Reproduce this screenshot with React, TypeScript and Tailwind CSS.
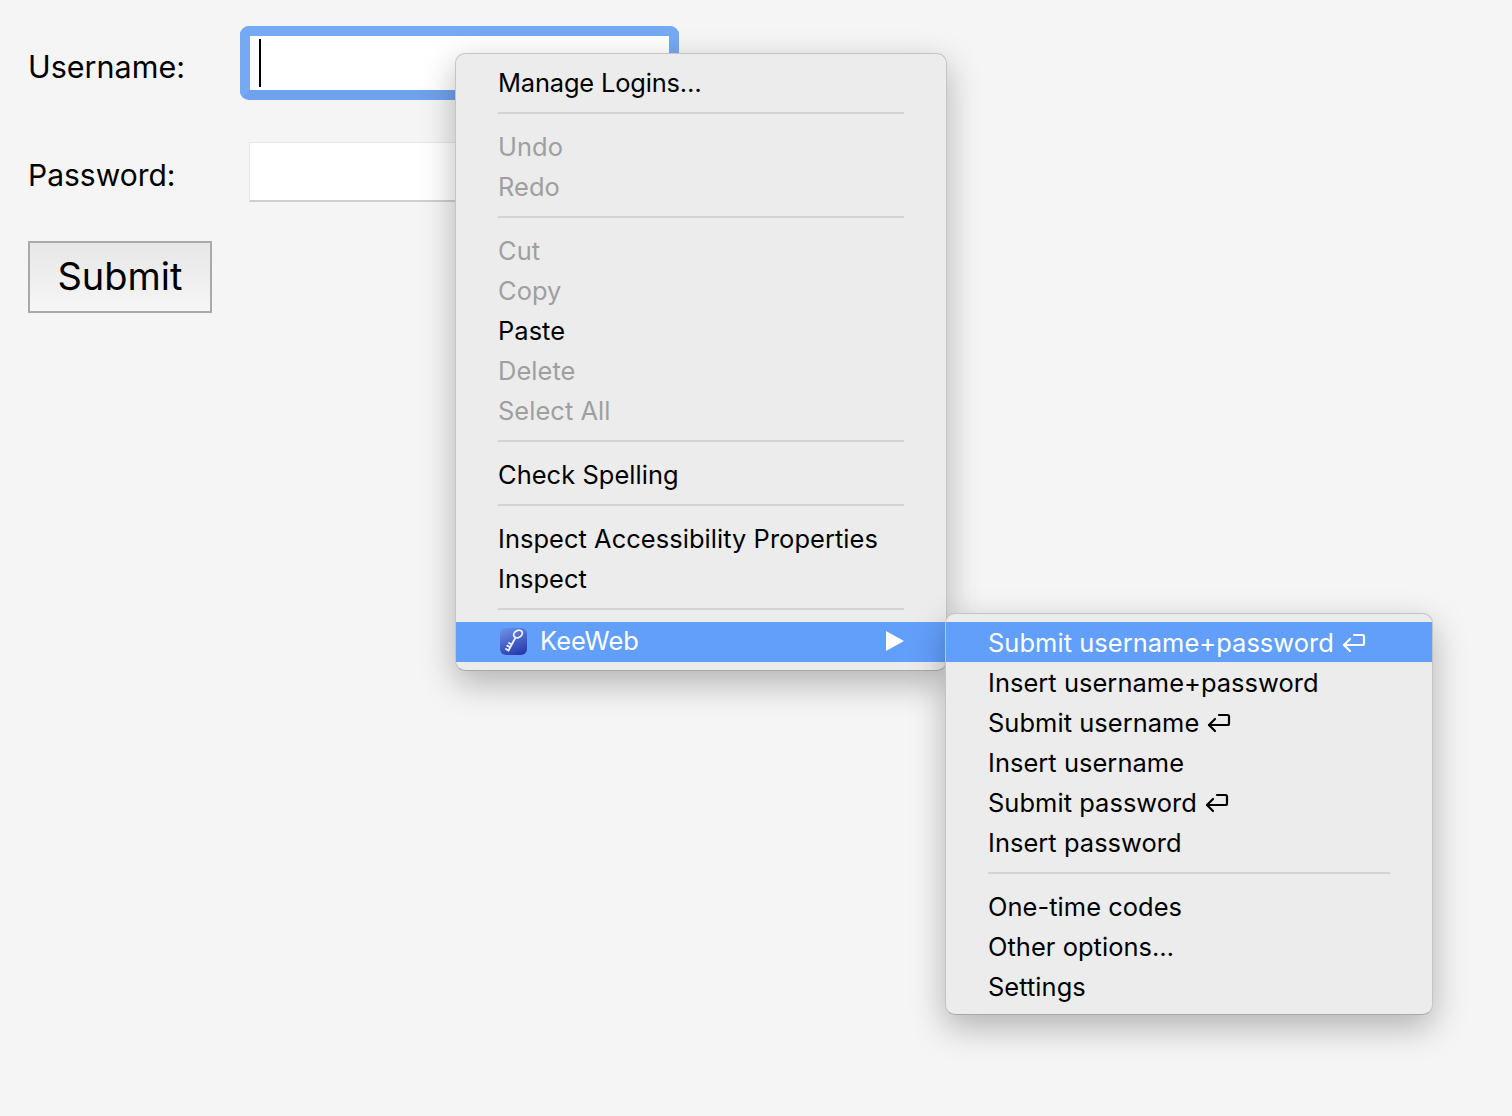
import React from "react";

const Sep = () => (
  <div className="h-6 flex items-center px-[42px] pb-[2px]">
    <div className="h-[2px] w-full bg-[#d3d3d3]" />
  </div>
);

const Item = ({ children, disabled, active }: { children: React.ReactNode; disabled?: boolean; active?: boolean }) => (
  <div
    className={`h-10 flex items-center pl-[42px] pr-[42px] pt-[2px] text-[25.45px] tracking-[0.05px] whitespace-nowrap ${
      active ? "bg-[#629ffb] text-white" : disabled ? "text-[#9f9f9f]" : "text-black"
    }`}
  >
    {children}
  </div>
);

const ReturnIcon = ({ color = "#000" }: { color?: string }) => (
  <svg width="24" height="20" viewBox="0 0 24 20" fill="none" stroke={color} strokeWidth="2.2" strokeLinecap="round" strokeLinejoin="round" className="ml-[8px]">
    <path d="M12 2h8.5A1.5 1.5 0 0 1 22 3.5v7a1.5 1.5 0 0 1-1.5 1.5H2" />
    <path d="M8 6l-6 6 6 6" />
  </svg>
);

const KeyIcon = () => (
  <svg width="29" height="29" viewBox="0 0 29 29" className="mr-[12px] ml-[1px] mt-[-4px]">
    <defs>
      <linearGradient id="kw" x1="0.2" y1="0" x2="0.6" y2="1">
        <stop offset="0" stopColor="#6a8fe8" />
        <stop offset="1" stopColor="#2a3cad" />
      </linearGradient>
    </defs>
    <rect x="1" y="1" width="27" height="27" rx="6" fill="url(#kw)" />
    <ellipse cx="19" cy="7" rx="4.6" ry="3.4" transform="rotate(-30 19 7)" fill="none" stroke="#eef1fc" strokeWidth="1.8" />
    <path d="M16.5 10.5L9.5 23.5M12.6 17.5L10 16M11 20.2L8.2 18.6M9.5 23.5L7 22" fill="none" stroke="#eef1fc" strokeWidth="1.8" strokeLinecap="round" />
  </svg>
);

const menuCls =
  "absolute bg-[#ececec] rounded-[10px] border border-[#c4c4c4] border-b-[#a9a9a9] shadow-[0_12px_34px_rgba(0,0,0,0.28)]";

export default function App() {
  return (
    <div className="relative min-h-[1116px] bg-[#f5f5f5] overflow-hidden pl-[28px] pt-[26px] text-black font-['Inter','Liberation_Sans',sans-serif]">
      <div className="flex items-center h-[74px]">
        <div className="w-[212px] text-[30.5px] leading-none mt-[8px]">Username:</div>
        <div className="w-[439px] h-[74px] rounded-[9px] border-[10px] border-[#76a9f3] border-b-[#6fa2ec] bg-white relative">
          <div className="absolute left-[9px] top-[3px] w-[2px] h-[48px] bg-black" />
        </div>
      </div>
      <div className="flex items-center h-[60px] mt-[42px]">
        <div className="w-[221px] text-[30px] leading-none mt-[6px]">Password:</div>
        <div className="w-[420px] h-[60px] mt-[-1px] bg-white border-t border-l border-[#e6e6e6] border-b-2 border-b-[#cfcfcf]" />
      </div>
      <button className="mt-[39px] block w-[184px] h-[72px] pb-[2px] border-2 border-[#a9a9a9] bg-gradient-to-b from-[#e7e7e7] to-[#f6f6f6] text-[38px] text-black leading-none">
        Submit
      </button>

      <div className={`${menuCls} left-[455px] top-[53px] w-[492px] h-[618px] pt-[8px] z-10`}>
        <Item><span className="tracking-[-0.17px]">Manage Logins…</span></Item>
        <Sep />
        <Item disabled>Undo</Item>
        <Item disabled>Redo</Item>
        <Sep />
        <Item disabled>Cut</Item>
        <Item disabled>Copy</Item>
        <Item>Paste</Item>
        <Item disabled>Delete</Item>
        <Item disabled>Select All</Item>
        <Sep />
        <Item>Check Spelling</Item>
        <Sep />
        <Item>Inspect Accessibility Properties</Item>
        <Item>Inspect</Item>
        <Sep />
        <Item active>
          <KeyIcon />
          <span className="flex-1 mt-[-4px]">KeeWeb</span>
          <svg width="18" height="20" viewBox="0 0 18 20" fill="#fff" className="mt-[-5px]"><path d="M0 0l18 10L0 20z" /></svg>
        </Item>
      </div>

      <div className={`${menuCls} left-[945px] top-[613px] w-[488px] h-[402px] pt-[8px] z-20`}>
        <Item active>Submit username+password<ReturnIcon color="#fff" /></Item>
        <Item>Insert username+password</Item>
        <Item>Submit username<ReturnIcon /></Item>
        <Item>Insert username</Item>
        <Item>Submit password<ReturnIcon /></Item>
        <Item>Insert password</Item>
        <Sep />
        <Item>One-time codes</Item>
        <Item>Other options…</Item>
        <Item>Settings</Item>
      </div>
    </div>
  );
}
